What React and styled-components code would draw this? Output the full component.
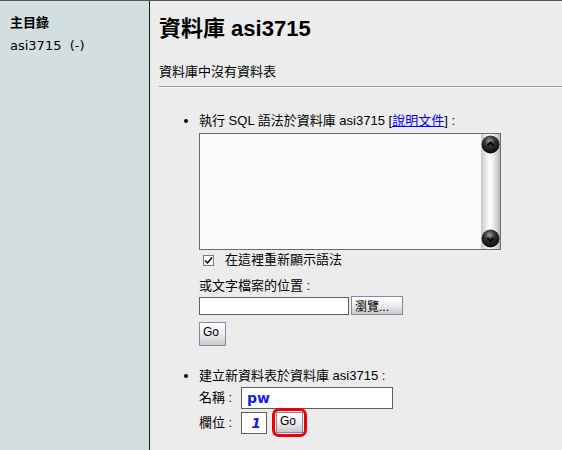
import styled, { createGlobalStyle } from "styled-components";

const GlobalStyle = createGlobalStyle`
  html, body {
    margin: 0;
    padding: 0;
    height: 100%;
  }
  body {
    font-family: "Liberation Sans", "Noto Sans CJK TC", sans-serif;
    font-size: 13px;
    color: #000;
    background: #ebebeb;
  }
  #root {
    height: 100%;
  }
`;

const Frame = styled.div`
  display: flex;
  height: 450px;
  width: 562px;
  border-top: 1px solid #555;
  box-sizing: border-box;
  overflow: hidden;
`;

const Sidebar = styled.div`
  width: 150px;
  flex: none;
  background: #d3dee1;
  border-right: 1px solid #1a1a1a;
  padding: 14px 0 0 10px;
  box-sizing: border-box;
`;

const NavTitle = styled.div`
  font-weight: bold;
  font-size: 13px;
  line-height: 16px;
`;

const NavItem = styled.div`
  margin-top: 7px;
  font-family: "DejaVu Sans", "Noto Sans CJK TC", sans-serif;
  font-size: 13px;
  line-height: 16px;
  white-space: pre;
`;

const Main = styled.div`
  flex: 1;
  background: #ececec;
  padding: 16px 0 0 9px;
`;

const Title = styled.h2`
  margin: 0;
  font-size: 22px;
  line-height: 24px;
  font-weight: bold;
`;

const Note = styled.p`
  margin: 23px 0 0;
  line-height: 16px;
`;

const Rule = styled.hr`
  margin: 6px 0 0;
  border: none;
  border-top: 1px solid #9a9a9a;
  border-bottom: 1px solid #f8f8f8;
`;

const List = styled.ul`
  margin: ${(p) => p.$top}px 0 0;
  padding-left: 40px;
  line-height: 16px;
`;

const Item = styled.li`
  list-style: disc;
`;

const Link = styled.a`
  color: #0000ee;
  text-decoration: underline;
`;

const SqlBox = styled.div`
  margin-top: 4px;
  width: 302px;
  height: 117px;
  box-sizing: border-box;
  border: 1px solid #6b6b6b;
  background: #fbfcfa;
  display: flex;
`;

const SqlArea = styled.textarea`
  flex: 1;
  border: none;
  background: transparent;
  resize: none;
  outline: none;
  overflow: hidden;
  padding: 2px;
  font: inherit;
`;

const ScrollTrack = styled.div`
  width: 19px;
  flex: none;
  display: flex;
  flex-direction: column;
  justify-content: space-between;
  align-items: center;
  padding: 1px 0;
  background: linear-gradient(
    to right,
    #c8c8c8 0%,
    #f4f4f4 35%,
    #ffffff 50%,
    #e6e6e6 70%,
    #b8b8b8 100%
  );
`;

const Ball = ({ down }) => (
  <svg width="19" height="19" viewBox="0 0 19 19">
    <defs>
      <radialGradient id={down ? "bd" : "bu"} cx="45%" cy="30%" r="70%">
        <stop offset="0" stopColor="#9a9a9a" />
        <stop offset="0.4" stopColor="#353535" />
        <stop offset="1" stopColor="#050505" />
      </radialGradient>
    </defs>
    <circle cx="9.5" cy="9.5" r="9" fill={`url(#${down ? "bd" : "bu"})`} />
    <path
      d={down ? "M6.5 9 L9.5 12 L12.5 9" : "M6.5 10.5 L9.5 7.5 L12.5 10.5"}
      stroke="#000"
      strokeWidth="1.8"
      fill="none"
    />
  </svg>
);

const CheckRow = styled.label`
  display: flex;
  align-items: center;
  margin-top: 2px;
  height: 16px;
  gap: 11px;
  padding-left: 4px;
`;

const Check = styled.span`
  width: 11px;
  height: 11px;
  box-sizing: border-box;
  border: 1px solid #7c7c7c;
  background: #fff;
  display: flex;
  align-items: center;
  justify-content: center;
`;

const FieldLabel = styled.div`
  margin-top: 10px;
  line-height: 16px;
`;

const Row = styled.div`
  display: flex;
  align-items: center;
  gap: ${(p) => p.$gap || 0}px;
  margin-top: ${(p) => p.$top || 0}px;
  height: ${(p) => p.$h || "auto"};
`;

const TextInput = styled.input`
  box-sizing: border-box;
  width: ${(p) => p.$w}px;
  height: ${(p) => p.$h}px;
  border: 1px solid #5e5e5e;
  background: #fff;
  padding: 0 5px;
  margin: 0;
  font-family: "DejaVu Sans", sans-serif;
  font-size: 14px;
  font-weight: bold;
  font-style: ${(p) => (p.$italic ? "italic" : "normal")};
  text-align: ${(p) => (p.$italic ? "right" : "left")};
  color: #1a1ae6;
  outline: none;
`;

const Button = styled.button`
  box-sizing: border-box;
  width: ${(p) => p.$w}px;
  height: ${(p) => p.$h}px;
  margin: 0;
  padding: 0 0 ${(p) => (p.$lift ? 4 : 0)}px 3px;
  text-align: left;
  border: 1px solid #8289ad;
  background: linear-gradient(to bottom, #ffffff 0%, #f0f0f0 45%, #c9c9c9 100%);
  font-family: "Liberation Sans", "Noto Sans CJK TC", sans-serif;
  font-size: 12px;
  color: #000;
`;

const Highlight = styled.span`
  display: inline-flex;
  margin-left: 5px;
  border: 3px solid #ee0000;
  border-radius: 7px;
  padding: 1px;
`;

const FormLabel = styled.span`
  width: 42px;
  flex: none;
`;

export default function App() {
  return (
    <>
      <GlobalStyle />
      <Frame>
        <Sidebar>
          <NavTitle>主目錄</NavTitle>
          <NavItem>{"asi3715  (-)"}</NavItem>
        </Sidebar>
        <Main>
          <Title>資料庫 asi3715</Title>
          <Note>資料庫中沒有資料表</Note>
          <Rule />
          <List $top={25}>
            <Item>
              執行 SQL 語法於資料庫 asi3715 [<Link href="#">說明文件</Link>] :
              <SqlBox>
                <SqlArea />
                <ScrollTrack>
                  <Ball />
                  <Ball down />
                </ScrollTrack>
              </SqlBox>
              <CheckRow>
                <Check>
                  <svg width="9" height="9" viewBox="0 0 9 9">
                    <path d="M1 4.5 L3.5 7 L8 1.5" stroke="#000" strokeWidth="1.5" fill="none" />
                  </svg>
                </Check>
                在這裡重新顯示語法
              </CheckRow>
              <FieldLabel>或文字檔案的位置 :</FieldLabel>
              <Row $top={2} $gap={2}>
                <TextInput $w={150} $h={18} />
                <Button $w={52} $h={19}>瀏覽...</Button>
              </Row>
              <Row $top={7}>
                <Button $w={27} $h={24} $lift>Go</Button>
              </Row>
            </Item>
          </List>
          <List $top={22}>
            <Item>
              建立新資料表於資料庫 asi3715 :
              <Row $top={3} $h="22px">
                <FormLabel>名稱 :</FormLabel>
                <TextInput $w={152} $h={22} defaultValue="pw" />
              </Row>
              <Row $h="27px">
                <FormLabel>欄位 :</FormLabel>
                <TextInput $w={26} $h={22} $italic defaultValue="1" />
                <Highlight>
                  <Button $w={27} $h={21} $lift>Go</Button>
                </Highlight>
              </Row>
            </Item>
          </List>
        </Main>
      </Frame>
    </>
  );
}
